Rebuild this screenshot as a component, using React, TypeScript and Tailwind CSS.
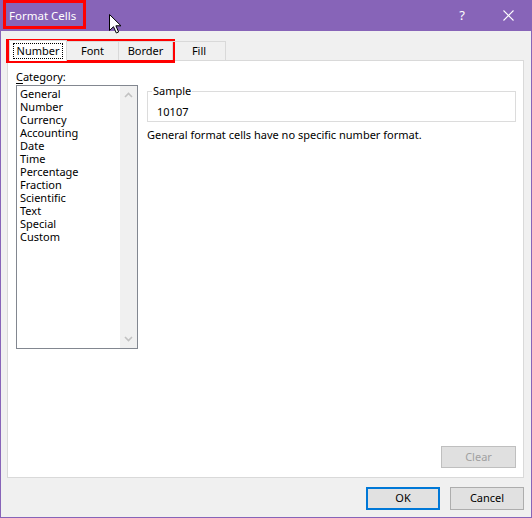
import React from 'react';

const categories = [
  'General',
  'Number',
  'Currency',
  'Accounting',
  'Date',
  'Time',
  'Percentage',
  'Fraction',
  'Scientific',
  'Text',
  'Special',
  'Custom',
];

function Chevron({ up }: { up?: boolean }) {
  return (
    <svg width="9" height="6" viewBox="0 0 9 6" className="block">
      <path
        d={up ? 'M1 5 L4.5 1.5 L8 5' : 'M1 1 L4.5 4.5 L8 1'}
        fill="none"
        stroke="#c2c2c2"
        strokeWidth="1.6"
      />
    </svg>
  );
}

function Cursor() {
  return (
    <svg width="13" height="20" viewBox="0 0 13 20" className="absolute left-[108px] top-[14px]">
      <path
        d="M0.5 0.5 L0.5 16.5 L4.5 12.7 L7.3 19 L9.6 18 L6.9 11.8 L12 11.8 Z"
        fill="#fff"
        stroke="#000"
        strokeWidth="1"
        strokeLinejoin="round"
      />
    </svg>
  );
}

export default function App() {
  return (
    <div className="relative w-[532px] h-[518px] flex flex-col bg-[#f0f0f0] border-x border-b border-[#8764b8] font-['Noto_Sans',sans-serif] text-[11px] text-black overflow-hidden">
      {/* Title bar */}
      <div className="h-[31px] shrink-0 flex items-center bg-[#8764b8] text-white">
        <span className="pl-[8px] text-[11.5px] leading-none">Format Cells</span>
        <div className="ml-auto flex h-full">
          <div className="w-[46px] flex items-center justify-center text-[13px]">?</div>
          <div className="w-[46px] flex items-center justify-center">
            <svg width="11" height="11" viewBox="0 0 11 11">
              <path d="M0.5 0.5 L10.5 10.5 M10.5 0.5 L0.5 10.5" stroke="#fff" strokeWidth="1.1" />
            </svg>
          </div>
        </div>
      </div>

      {/* Tabs */}
      <div className="relative z-10 mt-[9px] pl-[8px] flex items-end">
        <div className="h-[21px] w-[58px] -mb-px bg-white border-x border-t border-[#d9d9d9] pt-[2px] flex justify-center">
          <span className="h-[16px] px-[3px] border border-dotted border-black flex items-center">Number</span>
        </div>
        <div className="h-[19px] w-[52px] border-t border-r border-[#d9d9d9] flex items-center justify-center">Font</div>
        <div className="h-[19px] w-[54px] border-t border-r border-[#d9d9d9] flex items-center justify-center">Border</div>
        <div className="h-[19px] w-[53px] border-t border-r border-[#d9d9d9] flex items-center justify-center">Fill</div>
      </div>

      {/* Panel */}
      <div className="ml-[6px] w-[517px] h-[418px] bg-white border border-[#d9d9d9] flex flex-col pl-[8px] pr-[7px]">
        <div className="flex pt-[8px]">
          <div className="flex flex-col">
            <div className="leading-[16px]">
              <span className="underline underline-offset-2">C</span>ategory:
            </div>
            <div className="w-[122px] h-[264px] border border-[#828790] flex">
              <div className="flex-1 pl-[3px] pt-[1px] flex flex-col leading-[13px]">
                {categories.map((c) => (
                  <span key={c}>{c}</span>
                ))}
              </div>
              <div className="w-[17px] bg-[#f0f0f0] flex flex-col items-center justify-between py-[6px]">
                <Chevron up />
                <Chevron />
              </div>
            </div>
          </div>

          <div className="flex-1 ml-[9px] flex flex-col pt-[14px]">
            <fieldset className="border border-[#dcdcdc] pt-[5px] pb-[1px]">
              <legend className="ml-[4px] px-[1px] leading-[16px]">Sample</legend>
              <div className="pl-[9px] leading-[16px]">10107</div>
            </fieldset>
            <div className="mt-[5px] leading-[16px]">General format cells have no specific number format.</div>
          </div>
        </div>

        <div className="mt-auto mb-[9px] self-end w-[75px] h-[22px] bg-[#e0e0e0] border border-[#bfbfbf] text-[#a0a0a0] flex items-center justify-center">
          Clear
        </div>
      </div>

      {/* Dialog buttons */}
      <div className="mt-[9px] pr-[7px] flex justify-end gap-[10px]">
        <div className="w-[74px] h-[23px] bg-[#e1e1e1] border-2 border-[#0078d7] flex items-center justify-center">OK</div>
        <div className="w-[74px] h-[23px] bg-[#e1e1e1] border border-[#adadad] flex items-center justify-center">Cancel</div>
      </div>

      {/* Annotations */}
      <div className="absolute left-[2px] top-0 w-[83px] h-[29px] border-[3px] border-[#ff0000]" />
      <div className="absolute left-[5px] top-[39px] w-[169px] h-[24px] border-[3px] border-[#ff0000]" />
      <Cursor />
    </div>
  );
}
